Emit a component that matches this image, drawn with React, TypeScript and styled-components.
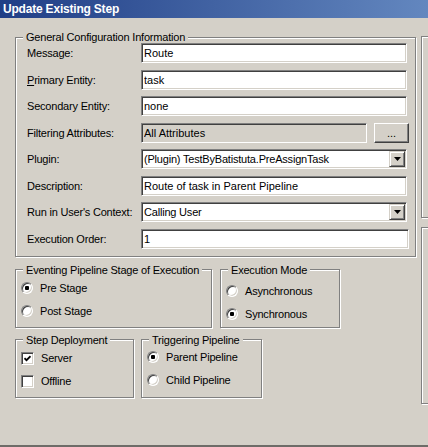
import React from 'react'
import styled, { createGlobalStyle } from 'styled-components'

const GlobalStyle = createGlobalStyle`
  html, body {
    margin: 0;
    padding: 0;
    background: #d4d0c8;
  }
  body {
    font-family: 'Liberation Sans', Arial, sans-serif;
    font-size: 11px;
    letter-spacing: -0.2px;
    color: #000;
  }
`

// classic win2k bevels
const sunken = `
  border: 1px solid;
  border-color: #808080 #fff #fff #808080;
  box-shadow: inset 1px 1px 0 #404040, inset -1px -1px 0 #d4d0c8;
`
const raised = `
  border: 1px solid;
  border-color: #fff #404040 #404040 #fff;
  box-shadow: inset -1px -1px 0 #808080;
`
const etched = `
  border: 1px solid #808080;
  box-shadow: inset 1px 1px 0 #fff, 1px 1px 0 #fff;
`

const Window = styled.div`
  width: 428px;
  height: 447px;
  box-sizing: border-box;
  overflow: hidden;
  display: flex;
  flex-direction: column;
  background: #d4d0c8;
  border-bottom: 2px solid #6e6c68;
`

const TitleBar = styled.div`
  flex: none;
  height: 18px;
  display: flex;
  align-items: center;
  padding-left: 3px;
  background: linear-gradient(to right, #203e86, #6387bf);
  color: #fff;
  font-weight: bold;
  font-size: 12px;
  letter-spacing: -0.2px;
`

const Body = styled.div`
  flex: 1;
  display: flex;
  gap: 5px;
  padding: 13px 0 0 15px;
`

const MainColumn = styled.div`
  flex: none;
  width: 401px;
  display: flex;
  flex-direction: column;
`

const SideColumn = styled.div`
  flex: none;
  width: 120px;
  display: flex;
  flex-direction: column;
  gap: 9px;
  padding-top: 5px;
`

const SidePanel = styled.div<{ $height: number }>`
  ${etched}
  box-sizing: border-box;
  height: ${(p) => p.$height}px;
`

const Group = styled.fieldset<{ $width?: number }>`
  ${etched}
  margin: 0;
  padding: 0;
  min-width: 0;
  box-sizing: border-box;
  width: ${(p) => (p.$width ? `${p.$width}px` : 'auto')};
`

const Legend = styled.legend`
  margin-left: 7px;
  padding: 0 3px;
  line-height: 12px;
  background: #d4d0c8;
`

const FormGrid = styled.div`
  display: grid;
  grid-template-columns: 114px 1fr;
  grid-auto-rows: 20px;
  row-gap: 6.5px;
  align-items: center;
  padding: 0 6px 7px 11px;
`

const Label = styled.span`
  white-space: nowrap;
`

const TextBox = styled.input<{ $disabled?: boolean; $flush?: boolean }>`
  ${sunken}
  box-sizing: border-box;
  width: ${(p) => (p.$flush ? '100%' : 'calc(100% - 2px)')};
  height: 20px;
  margin: 0;
  padding: 0 0 0 2px;
  font: inherit;
  color: #000;
  outline: none;
  background: ${(p) => (p.$disabled ? '#d4d0c8' : '#fff')};
`

const FieldWithButton = styled.div`
  display: flex;
  gap: 7px;
  height: 20px;
`

const PushButton = styled.button`
  ${raised}
  flex: none;
  width: 35px;
  height: 20px;
  margin: 0;
  padding: 0;
  background: #d4d0c8;
  font: inherit;
  color: #000;
`

const Combo = styled.div`
  ${sunken}
  box-sizing: border-box;
  display: flex;
  align-items: center;
  width: calc(100% - 2px);
  height: 20px;
  padding: 1px;
  background: #fff;
`

const ComboText = styled.span`
  flex: 1;
  padding-left: 1px;
  white-space: nowrap;
  overflow: hidden;
`

const DropButton = styled.span`
  box-sizing: border-box;
  flex: none;
  width: 16px;
  height: 16px;
  display: flex;
  align-items: center;
  justify-content: center;
  background: #d4d0c8;
  border: 1px solid;
  border-color: #d4d0c8 #404040 #404040 #d4d0c8;
  box-shadow: inset 1px 1px 0 #fff, inset -1px -1px 0 #808080;
`

const LowerRow = styled.div<{ $gap: number; $top: number }>`
  display: flex;
  align-items: stretch;
  gap: ${(p) => p.$gap}px;
  margin-top: ${(p) => p.$top}px;
`

const OptionList = styled.div<{ $pt: number; $pb: number }>`
  display: flex;
  flex-direction: column;
  padding: ${(p) => p.$pt}px 0 ${(p) => p.$pb}px 5px;
`

const Option = styled.label`
  display: flex;
  align-items: center;
  gap: 7px;
  height: 23px;
  white-space: nowrap;
`

const RadioCircle = styled.span<{ $on?: boolean }>`
  ${sunken}
  position: relative;
  flex: none;
  box-sizing: border-box;
  width: 12px;
  height: 12px;
  border-radius: 50%;
  background: #fff;

  &::after {
    content: '';
    display: ${(p) => (p.$on ? 'block' : 'none')};
    position: absolute;
    left: 3px;
    top: 3px;
    width: 4px;
    height: 4px;
    border-radius: 1px;
    background: #000;
  }
`

const CheckBox = styled.span`
  ${sunken}
  flex: none;
  box-sizing: border-box;
  width: 13px;
  height: 13px;
  display: flex;
  align-items: center;
  justify-content: center;
  background: #fff;
`

const Arrow = () => (
  <svg width="7" height="4" viewBox="0 0 7 4">
    <polygon points="0,0 7,0 3.5,4" fill="#000" />
  </svg>
)

const Tick = () => (
  <svg width="7" height="7" viewBox="0 0 7 7">
    <path d="M0.5 3.2 L2.5 5.2 L6.5 1.2" fill="none" stroke="#000" strokeWidth="1.7" />
  </svg>
)

const Radio = ({ on, children }: { on?: boolean; children: React.ReactNode }) => (
  <Option>
    <RadioCircle $on={on} />
    {children}
  </Option>
)

const Check = ({ on, children }: { on?: boolean; children: React.ReactNode }) => (
  <Option>
    <CheckBox>{on && <Tick />}</CheckBox>
    {children}
  </Option>
)

const Select = ({ value }: { value: string }) => (
  <Combo>
    <ComboText>{value}</ComboText>
    <DropButton>
      <Arrow />
    </DropButton>
  </Combo>
)

export default function App() {
  return (
    <>
      <GlobalStyle />
      <Window>
        <TitleBar>Update Existing Step</TitleBar>
        <Body>
          <MainColumn>
            <Group>
              <Legend>General Configuration Information</Legend>
              <FormGrid>
                <Label>Message:</Label>
                <TextBox readOnly value="Route" />

                <Label>
                  <u>P</u>rimary Entity:
                </Label>
                <TextBox readOnly value="task" />

                <Label>Secondary Entity:</Label>
                <TextBox readOnly value="none" />

                <Label>Filtering Attributes:</Label>
                <FieldWithButton>
                  <TextBox readOnly $disabled $flush value="All Attributes" />
                  <PushButton>...</PushButton>
                </FieldWithButton>

                <Label>Plugin:</Label>
                <Select value="(Plugin) TestByBatistuta.PreAssignTask" />

                <Label>Description:</Label>
                <TextBox readOnly value="Route of task in Parent Pipeline" />

                <Label>Run in User's Context:</Label>
                <Select value="Calling User" />

                <Label>Execution Order:</Label>
                <TextBox readOnly $flush value="1" />
              </FormGrid>
            </Group>

            <LowerRow $gap={8} $top={7}>
              <Group $width={197}>
                <Legend>Eventing Pipeline Stage of Execution</Legend>
                <OptionList $pt={1} $pb={4}>
                  <Radio on>Pre Stage</Radio>
                  <Radio>Post Stage</Radio>
                </OptionList>
              </Group>
              <Group $width={120}>
                <Legend>Execution Mode</Legend>
                <OptionList $pt={4} $pb={1}>
                  <Radio>Asynchronous</Radio>
                  <Radio on>Synchronous</Radio>
                </OptionList>
              </Group>
            </LowerRow>

            <LowerRow $gap={7} $top={6}>
              <Group $width={119}>
                <Legend>Step Deployment</Legend>
                <OptionList $pt={1} $pb={4}>
                  <Check on>Server</Check>
                  <Check>Offline</Check>
                </OptionList>
              </Group>
              <Group $width={121}>
                <Legend>Triggering Pipeline</Legend>
                <OptionList $pt={0} $pb={5}>
                  <Radio on>Parent Pipeline</Radio>
                  <Radio>Child Pipeline</Radio>
                </OptionList>
              </Group>
            </LowerRow>
          </MainColumn>

          <SideColumn>
            <SidePanel $height={182} />
            <SidePanel $height={177} />
          </SideColumn>
        </Body>
      </Window>
    </>
  )
}
